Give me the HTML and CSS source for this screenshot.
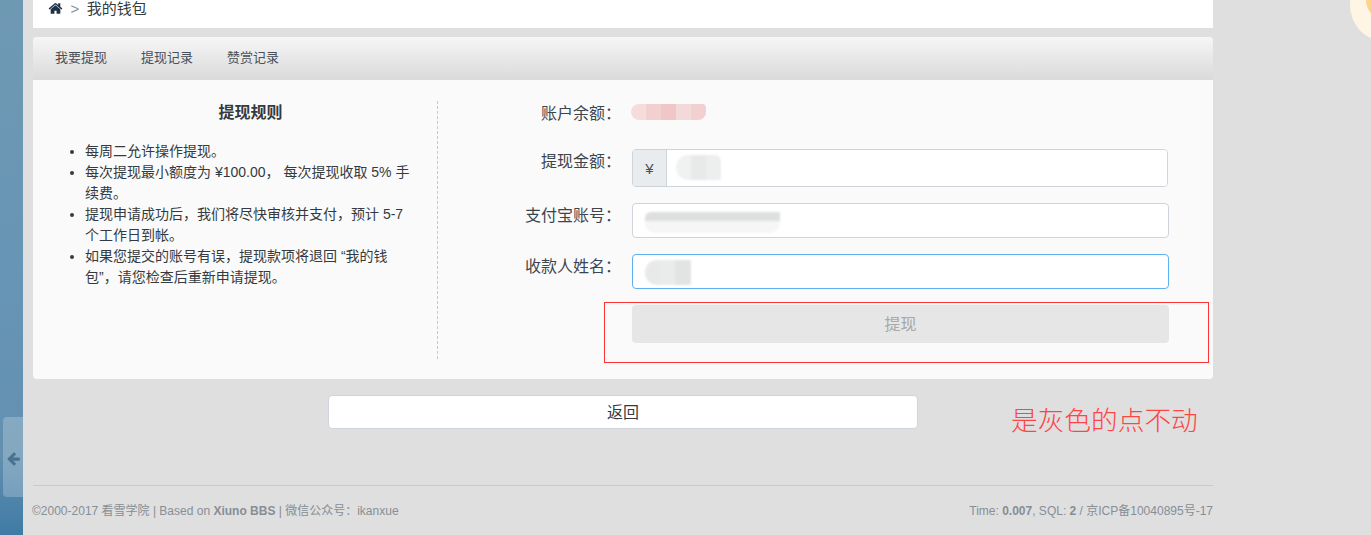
FILE: index.html
```html
<!DOCTYPE html>
<html lang="zh-CN">
<head>
<meta charset="utf-8">
<title>我的钱包</title>
<link rel="stylesheet" href="styles.css">
</head>
<body>
<div class="page">
  <aside class="strip"></aside>
  <main class="main">
    <nav class="crumb">
      <svg class="home" viewBox="0 0 1792 1792"><path d="M1472 992v480q0 26-19 45t-45 19h-384v-384h-256v384h-384q-26 0-45-19t-19-45v-480q0-1 .5-3t.5-3l575-474 575 474q1 2 1 6zm223-69l-62 74q-8 9-21 11h-3q-13 0-21-7l-692-577-692 577q-12 8-24 7-13-2-21-11l-62-74q-8-10-7-23.5t11-21.5l719-599q32-26 76-26t76 26l244 204v-195q0-14 9-23t23-9h192q14 0 23 9t9 23v408l219 182q10 8 11 21.5t-7 23.5z"/></svg>
      <span class="sep">&gt;</span>
      <span>我的钱包</span>
    </nav>
    <section class="panel">
      <div class="tabs">
        <a class="tab">我要提现</a>
        <a class="tab">提现记录</a>
        <a class="tab">赞赏记录</a>
      </div>
      <div class="body">
        <div class="rules">
          <h2 class="rules-title">提现规则</h2>
          <ul class="rules-list">
            <li>每周二允许操作提现。</li>
            <li>每次提现最小额度为 ¥100.00， 每次提现收取 5% 手续费。</li>
            <li>提现申请成功后，我们将尽快审核并支付，预计 5-7 个工作日到帐。</li>
            <li>如果您提交的账号有误，提现款项将退回 “我的钱包”，请您检查后重新申请提现。</li>
          </ul>
        </div>
        <form class="form">
          <div class="row row-balance">
            <label class="label">账户余额<span class="p">：</span></label>
            <div class="blot-balance"></div>
          </div>
          <div class="row">
            <label class="label">提现金额<span class="p">：</span></label>
            <div class="group">
              <span class="addon">¥</span>
              <div class="field field-amount"><i class="blot blot-amount"></i></div>
            </div>
          </div>
          <div class="row">
            <label class="label">支付宝账号<span class="p">：</span></label>
            <div class="field field-plain"><i class="blot blot-account"></i></div>
          </div>
          <div class="row">
            <label class="label">收款人姓名<span class="p">：</span></label>
            <div class="field field-plain field-focus"><i class="blot blot-name"></i></div>
          </div>
          <div class="row row-submit">
            <span></span>
            <button class="submit" type="button" disabled>提现</button>
          </div>
        </form>
      </div>
    </section>
    <div class="back-wrap"><button class="back" type="button">返回</button></div>
    <footer class="footer">
      <span class="foot-left">©2000-2017 看雪学院 | Based on <b>Xiuno BBS</b> | 微信公众号<span class="p">：</span>ikanxue</span>
      <span>Time: <b>0.007</b>, SQL: <b>2</b> / 京ICP备10040895号-17</span>
    </footer>
  </main>
</div>
<div class="side-tab">
  <svg class="arrow" viewBox="0 0 1792 1792"><path d="M1664 896v128q0 53-32.5 90.5t-84.5 37.5h-704l293 294q38 36 38 90t-38 90l-75 76q-37 37-90 37-52 0-91-37l-651-652q-37-37-37-90 0-52 37-91l651-650q38-38 91-38 52 0 90 38l75 74q38 38 38 91t-38 91l-293 293h704q52 0 84.5 37.5t32.5 90.5z"/></svg>
</div>
<div class="mascot"><div class="mascot-inner"></div></div>
<div class="note-box"></div>
<div class="note-text">是灰色的点不动</div>
</body>
</html>
```
FILE: styles.css
```css
* { box-sizing: border-box; }
html, body { margin: 0; padding: 0; height: 535px; overflow: hidden; }
body {
  background: #dfdfdf;
  color: #343a40;
  font: 14px/21px "Liberation Sans", "Noto Sans CJK SC", sans-serif;
  position: relative;
}
.p { font-family: "Noto Sans CJK TC", sans-serif; line-height: 1; }
.page { display: flex; height: 535px; }
.strip {
  width: 23px;
  flex: none;
  background: linear-gradient(180deg, #6f99b3 0%, #6795b5 50%, #6390b0 85%, #3f7ba5 100%);
}
.main { width: 1180px; margin-left: 10px; flex: none; }
.crumb {
  height: 28px;
  background: #fff;
  display: flex;
  align-items: center;
  padding: 0 15px 11px;
  gap: 7.5px;
  font-size: 15px;
}
.home { width: 15px; height: 15px; fill: #1f3347; }
.sep { color: #868e96; }
.panel { margin-top: 9px; border-radius: 4px; overflow: hidden; background: #fafafa; }
.tabs {
  height: 43px;
  display: flex;
  align-items: center;
  padding: 0 0 2px 22px;
  gap: 34px;
  background: linear-gradient(180deg, #f6f6f6 0%, #dadada 100%);
  font-size: 13px;
  color: #495057;
}
.body { display: flex; padding: 21px 0 20px; height: 299px; }
.rules { width: 405px; flex: none; border-right: 1px dashed #c9c9c9; padding: 0 25px 0 12px; }
.rules-title {
  margin: 0 0 16px;
  padding-left: 44px;
  text-align: center;
  font-size: 16px;
  line-height: 24px;
  font-weight: 700;
}
.rules-list { margin: 0; padding-left: 40px; font-size: 14px; }
.form { flex: 1; display: flex; flex-direction: column; gap: 16px; }
.row { display: grid; grid-template-columns: 183px 537px; column-gap: 11px; align-items: start; }
.label { text-align: right; font-size: 16px; line-height: 24px; padding-top: 1px; white-space: nowrap; color: #3d454c; }
.row-balance { height: 24px; margin-bottom: 8px; }
.blot-balance {
  width: 75px;
  height: 16px;
  margin: 3px 0 0 -1px;
  border-radius: 8px 4px 8px 8px;
  background: linear-gradient(90deg, #f6dcdc 20%, #f2d0d0 20% 40%, #efc7c7 40% 60%, #f3d9d9 60% 80%, #f3d0d0 80%);
}
.group { display: flex; height: 38px; width: 536px; border: 1px solid #ced4da; border-radius: 4px; overflow: hidden; background: #fff; }
.addon { width: 34px; flex: none; display: flex; align-items: center; justify-content: center; background: #e9ecef; border-right: 1px solid #ced4da; color: #495057; font-size: 15px; }
.field { background: #fff; position: relative; }
.field-amount { flex: 1; }
.field-plain { height: 35px; border: 1px solid #ced4da; border-radius: 4px; }
.field-focus { border-color: #5fb0ee; }
.blot { position: absolute; display: block; filter: blur(1px); }
.blot-amount {
  left: 9px; top: 5px; width: 45px; height: 25px;
  border-radius: 12px 6px 2px 12px;
  background: linear-gradient(90deg, #f0f2f2 33%, #e8eaea 33% 66%, #edefef 66%);
}
.blot-account {
  left: 12px; top: 8px; width: 135px; height: 21px;
  border-radius: 6px 0 10px 10px;
  background: linear-gradient(180deg, #dedfdf 0 45%, #f6f6f6 45%);
}
.blot-name {
  left: 12px; top: 5px; width: 46px; height: 25px;
  border-radius: 12px 2px 2px 12px;
  background: linear-gradient(90deg, #e8eaea 33%, #eaecec 33% 66%, #e2e4e4 66%);
}
.submit {
  height: 38px;
  border: 0;
  border-radius: 4px;
  padding: 0;
  background: #e6e6e6;
  color: #a8a8a8;
  font: inherit;
  font-size: 16px;
}
.back-wrap { margin-top: 16px; padding-left: 295px; }
.back {
  width: 590px;
  height: 34px;
  padding: 0;
  background: #fff;
  border: 1px solid #ced4da;
  border-radius: 4px;
  font: inherit;
  font-size: 16px;
  color: #343a40;
}
.footer {
  margin-top: 56px;
  border-top: 1px solid #c9c9c9;
  padding-top: 15px;
  display: flex;
  justify-content: space-between;
  font-size: 12px;
  color: #868e96;
}
.foot-left { margin-left: -1px; }
.side-tab {
  position: absolute;
  left: 3px;
  top: 417px;
  width: 20px;
  height: 80px;
  border-radius: 4px 0 0 4px;
  background: rgba(255, 255, 255, .22);
  display: flex;
  align-items: center;
  justify-content: center;
  padding-top: 3px;
}
.arrow { width: 15px; height: 15px; fill: #4a7391; }
.mascot {
  position: absolute;
  left: 1350px;
  top: -32px;
  width: 74px;
  height: 74px;
  border-radius: 50%;
  background: #fef5e4;
}
.mascot-inner {
  position: absolute;
  left: 16px;
  top: 12px;
  width: 40px;
  height: 40px;
  border-radius: 50%;
  background: #fbd38a;
}
.note-box {
  position: absolute;
  left: 604px;
  top: 302px;
  width: 605px;
  height: 61px;
  border: 1px solid #f33;
}
.note-text {
  position: absolute;
  left: 1011px;
  top: 402px;
  font-family: "Noto Sans CJK SC", serif;
  font-weight: 300;
  font-size: 26.7px;
  line-height: 34px;
  color: #f44;
  white-space: nowrap;
}
```
